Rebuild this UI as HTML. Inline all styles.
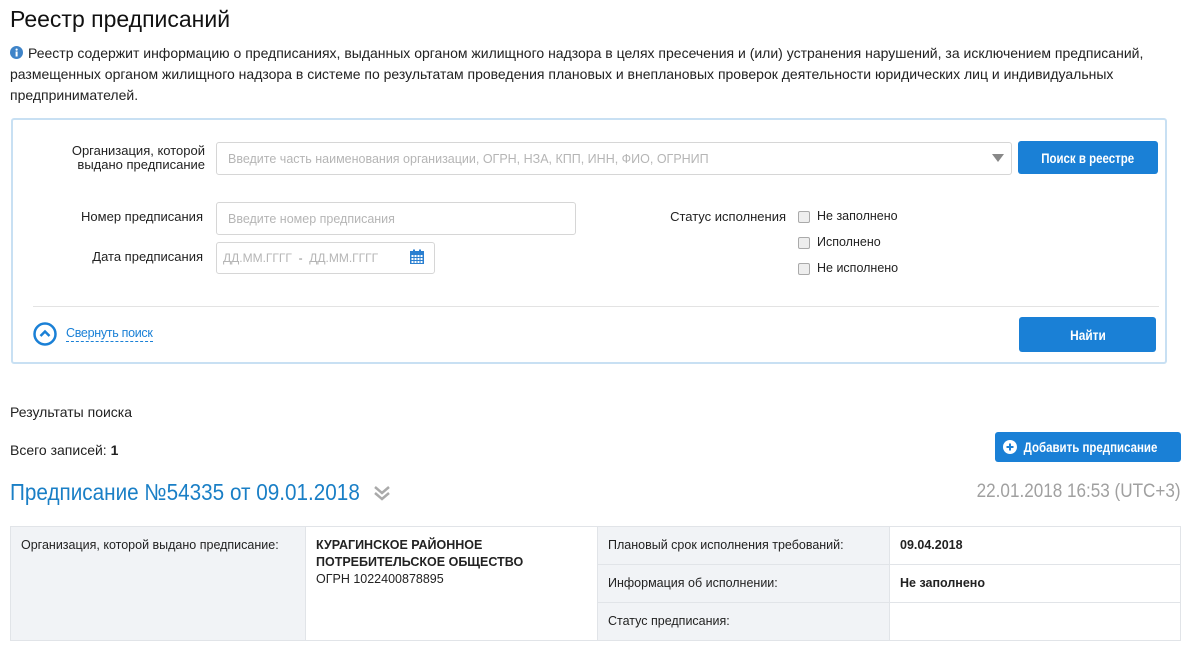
<!DOCTYPE html>
<html><head><meta charset="utf-8">
<style>
*{box-sizing:border-box;margin:0;padding:0}
body{width:1193px;height:650px;overflow:hidden;background:#fff;font-family:"Liberation Sans",sans-serif;color:#222;position:relative;font-size:14px}
.a{position:absolute;white-space:nowrap}
.inp{position:absolute;border:1px solid #d6d6d6;border-radius:3px;background:#fff;color:#b5b5b5;font-size:12.5px;padding-left:11px;display:flex;align-items:center}
.btn{position:absolute;background:#1a80d6;color:#fff;font-weight:bold;border-radius:3px;display:flex;align-items:center;justify-content:center;font-size:14px}
.cb{position:absolute;width:12px;height:12px;border:1px solid #aaa;border-radius:2px;background:#eee;left:798px}
.cell{position:absolute;border:1px solid #e1e4e8;font-size:12.5px;padding:11px 10px}
.g{background:#f1f3f6}
.sx{display:inline-block;transform-origin:center}
</style></head><body>
<div class="a" style="left:10px;top:6px;font-size:23px;color:#111">Реестр предписаний</div>
<svg class="a" style="left:10px;top:46px" width="13" height="13" viewBox="0 0 13 13"><circle cx="6.5" cy="6.5" r="6.5" fill="#3f84c8"/><rect x="5.6" y="5.5" width="2" height="5" fill="#fff"/><circle cx="6.6" cy="3.6" r="1.1" fill="#fff"/></svg>
<div class="a" style="left:10px;top:43px;line-height:21px;font-size:14px;color:#222;white-space:normal;width:1170px;text-indent:18px">Реестр содержит информацию о предписаниях, выданных органом жилищного надзора в целях пресечения и (или) устранения нарушений, за исключением предписаний, размещенных органом жилищного надзора в системе по результатам проведения плановых и внеплановых проверок деятельности юридических лиц и индивидуальных предпринимателей.</div>

<div class="a" style="left:11px;top:118px;width:1156px;height:246px;border:2px solid #c8e0f3;border-radius:3px"></div>
<div class="a" style="left:60px;top:144px;width:145px;text-align:right;line-height:14px;font-size:13px">Организация, которой<br>выдано предписание</div>
<div class="inp" style="left:216px;top:142px;width:796px;height:33px">Введите часть наименования организации, ОГРН, НЗА, КПП, ИНН, ФИО, ОГРНИП</div>
<div class="a" style="left:992px;top:154px;width:0;height:0;border-left:6px solid transparent;border-right:6px solid transparent;border-top:8px solid #888"></div>
<div class="btn" style="left:1018px;top:141px;width:140px;height:33px"><span class="sx" style="transform:scaleX(.82)">Поиск в реестре</span></div>

<div class="a" style="left:60px;top:209px;width:143px;text-align:right;font-size:13px">Номер предписания</div>
<div class="inp" style="left:216px;top:202px;width:360px;height:33px">Введите номер предписания</div>
<div class="a" style="left:60px;top:249px;width:143px;text-align:right;font-size:13px">Дата предписания</div>
<div class="inp" style="left:216px;top:242px;width:219px;height:32px;padding-left:6px;font-size:12px">ДД.ММ.ГГГГ &nbsp;<span style="color:#888">-</span>&nbsp; ДД.ММ.ГГГГ</div>
<svg class="a" style="left:409px;top:249px" width="16" height="16" viewBox="0 0 16 16"><rect x="1" y="2" width="14" height="13" fill="#2a7fd0"/><rect x="4" y="0.5" width="2" height="3" fill="#2a7fd0"/><rect x="10" y="0.5" width="2" height="3" fill="#2a7fd0"/><g fill="#fff"><rect x="2.5" y="6" width="2" height="2"/><rect x="5.5" y="6" width="2" height="2"/><rect x="8.5" y="6" width="2" height="2"/><rect x="11.5" y="6" width="2" height="2"/><rect x="2.5" y="9" width="2" height="2"/><rect x="5.5" y="9" width="2" height="2"/><rect x="8.5" y="9" width="2" height="2"/><rect x="11.5" y="9" width="2" height="2"/><rect x="2.5" y="12" width="2" height="2"/><rect x="5.5" y="12" width="2" height="2"/><rect x="8.5" y="12" width="2" height="2"/><rect x="11.5" y="12" width="2" height="2"/></g></svg>

<div class="a" style="left:640px;top:209px;width:146px;text-align:right;font-size:13px">Статус исполнения</div>
<div class="cb" style="top:211px"></div><div class="a" style="left:817px;top:209px;font-size:12.5px">Не заполнено</div>
<div class="cb" style="top:237px"></div><div class="a" style="left:817px;top:235px;font-size:12.5px">Исполнено</div>
<div class="cb" style="top:263px"></div><div class="a" style="left:817px;top:261px;font-size:12.5px">Не исполнено</div>

<div class="a" style="left:33px;top:306px;width:1126px;height:1px;background:#e3e3e3"></div>
<svg class="a" style="left:33px;top:322px" width="24" height="24" viewBox="0 0 24 24"><circle cx="12" cy="12" r="10.5" fill="none" stroke="#1a80d6" stroke-width="2.5"/><path d="M7.5 14 L12 9.5 L16.5 14" fill="none" stroke="#1a80d6" stroke-width="2.5"/></svg>
<div class="a" style="left:66px;top:325px;font-size:12.5px;color:#1a80d6;border-bottom:1px dashed #1a80d6;line-height:16px;letter-spacing:-0.3px">Свернуть поиск</div>
<div class="btn" style="left:1019px;top:317px;width:137px;height:35px"><span class="sx" style="transform:scaleX(.85)">Найти</span></div>

<div class="a" style="left:10px;top:404px;font-size:14px">Результаты поиска</div>
<div class="a" style="left:10px;top:442px;font-size:14px">Всего записей: <b>1</b></div>
<div class="btn" style="left:995px;top:432px;width:186px;height:30px;font-size:14px"><svg width="14" height="14" viewBox="0 0 14 14" style="margin-right:-8px"><circle cx="7" cy="7" r="7" fill="#fff"/><path d="M7 3.5v7M3.5 7h7" stroke="#1a80d6" stroke-width="2"/></svg><span class="sx" style="transform:scaleX(.82)">Добавить предписание</span></div>

<div class="a" style="left:10px;top:479px;font-size:23px;color:#1a7fc6;transform:scaleX(.9);transform-origin:left">Предписание №54335 от 09.01.2018</div>
<svg class="a" style="left:372px;top:484px" width="20" height="18" viewBox="0 0 20 18"><path d="M3 3l7 6 7-6M3 9l7 6 7-6" fill="none" stroke="#aaa" stroke-width="2.5"/></svg>
<div class="a" style="right:12px;top:481px;font-size:19px;color:#a0a0a0;transform:scaleX(.9);transform-origin:right">22.01.2018 16:53 (UTC+3)</div>

<div class="cell g" style="left:10px;top:526px;width:296px;height:115px">Организация, которой выдано предписание:</div>
<div class="cell" style="left:305px;top:526px;width:293px;height:115px;line-height:17px;padding-top:10px"><b>КУРАГИНСКОЕ РАЙОННОЕ<br>ПОТРЕБИТЕЛЬСКОЕ ОБЩЕСТВО</b><br>ОГРН 1022400878895</div>
<div class="cell g" style="left:597px;top:526px;width:293px;height:39px">Плановый срок исполнения требований:</div>
<div class="cell" style="left:889px;top:526px;width:292px;height:39px"><b>09.04.2018</b></div>
<div class="cell g" style="left:597px;top:564px;width:293px;height:39px">Информация об исполнении:</div>
<div class="cell" style="left:889px;top:564px;width:292px;height:39px"><b>Не заполнено</b></div>
<div class="cell g" style="left:597px;top:602px;width:293px;height:39px">Статус предписания:</div>
<div class="cell" style="left:889px;top:602px;width:292px;height:39px"></div>
</body></html>
